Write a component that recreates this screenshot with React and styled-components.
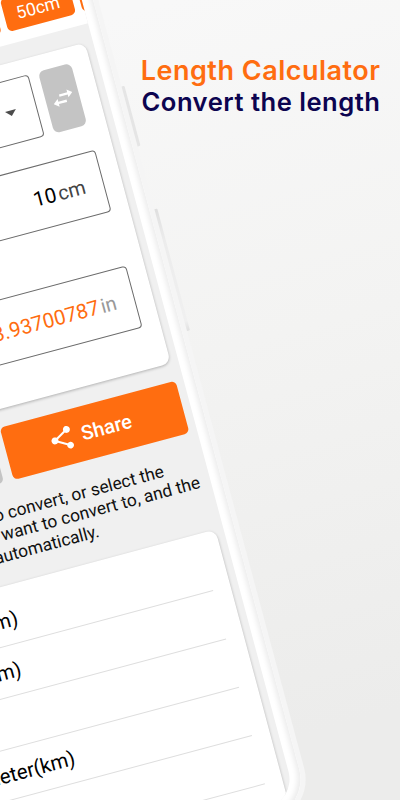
import React from "react";
import styled, { createGlobalStyle } from "styled-components";
import { MdShare, MdArrowDropDown } from "react-icons/md";

const GlobalStyle = createGlobalStyle`
  body {
    margin: 0;
    overflow: hidden;
    font-family: Roboto, "Liberation Sans", sans-serif;
  }

  * {
    box-sizing: border-box;
  }
`;

const Page = styled.main`
  display: grid;
  grid-template: 800px / 400px;
  width: 400px;
  height: 800px;
  overflow: hidden;
  background: linear-gradient(165deg, #f8f8f8 5%, #f3f3f2 45%, #ececeb 90%);
`;

const Headline = styled.header`
  grid-area: 1 / 1;
  justify-self: end;
  padding: 55px 20px 0 0;
  text-align: right;
  font-family: Inter, "Open Sans", sans-serif;
  font-weight: 600;
  line-height: 31px;
`;

const HeadlineText = styled.div`
  color: ${({ $color }) => $color};
  font-size: ${({ $size }) => $size}px;
  letter-spacing: ${({ $spacing }) => $spacing}px;
  margin-right: ${({ $spacing }) => -$spacing}px;
  white-space: nowrap;
`;

const Phone = styled.section`
  grid-area: 1 / 1;
  position: relative;
  width: 410px;
  height: 945px;
  margin: -80px 0 0 -315.5px;
  padding: 11px;
  border: 5px solid #f5f5f5;
  border-radius: 45px;
  background: #ffffff;
  box-shadow: inset -4px -2px 5px -1px #ededed;
  transform: rotate(-15deg);
  transform-origin: 315.5px 80px;
`;

const SideKey = styled.span`
  position: absolute;
  right: -8px;
  top: ${({ $top }) => $top}px;
  width: 3px;
  height: ${({ $height }) => $height}px;
  border-radius: 0 1px 1px 0;
  background: ${({ $background }) => $background};
`;

const Screen = styled.div`
  display: flex;
  flex-direction: column;
  height: 100%;
  overflow: hidden;
  border-radius: 29px;
  background: #f0f0f0;
`;

const ChipBar = styled.div`
  display: flex;
  flex: none;
  align-items: flex-end;
  justify-content: flex-end;
  gap: 7px;
  height: 109px;
  padding-bottom: 12px;
  background: #ffffff;
`;

const Chip = styled.button`
  flex: none;
  width: 70.5px;
  height: 34.5px;
  padding: 3px 0 0;
  border: none;
  border-radius: 5px;
  background: #ff6d10;
  color: #ffffff;
  font: 400 17.6px Roboto, sans-serif;

  &:last-child {
    margin-right: -68.5px;
  }
`;

const Card = styled.div`
  flex: none;
  margin: ${({ $top }) => $top}px 8px 0;
  padding: ${({ $padding }) => $padding};
  border-radius: 9px;
  background: #ffffff;
  box-shadow: 0 1px 3px rgba(0, 0, 0, 0.26);
`;

const SelectRow = styled.div`
  display: flex;
  gap: 10px;
  margin-bottom: 26px;
`;

const Field = styled.div`
  display: flex;
  flex: 1;
  align-items: center;
  justify-content: flex-end;
  height: 64px;
  margin-bottom: ${({ $bottom }) => $bottom || 0}px;
  padding: 2px ${({ $right }) => $right || 18}px 0 0;
  border: 1px solid #6b6b6b;
  border-radius: 4px;
  color: ${({ $color }) => $color || "#000000"};
  font-size: 20.6px;
`;

const Unit = styled.span`
  margin-left: 2px;
  color: ${({ $color }) => $color};
  font-size: 20px;
`;

const SwapButton = styled.button`
  display: flex;
  align-items: center;
  justify-content: center;
  width: 34px;
  height: 64px;
  margin-right: 1px;
  padding: 0;
  border: none;
  border-radius: 6px;
  background: #c4c4c4;
`;

const Actions = styled.div`
  display: flex;
  flex: none;
  gap: 10px;
  margin: 18px 8px 0;
`;

const ActionButton = styled.button`
  display: flex;
  flex: ${({ $wide }) => ($wide ? "none" : 1)};
  align-items: center;
  justify-content: center;
  gap: 6px;
  width: ${({ $wide }) => ($wide ? "182.5px" : "auto")};
  height: 54px;
  padding: 0 9px 0 0;
  border: none;
  border-radius: 5px;
  background: ${({ $wide }) => ($wide ? "#ff6d10" : "#c4c4c4")};
  color: #ffffff;
  font: 500 20px Roboto, sans-serif;
`;

const Help = styled.p`
  flex: none;
  margin: 20px 0 0;
  color: #111111;
  font-size: 17.4px;
  line-height: 20.8px;
  text-align: right;
`;

const HelpLine = styled.span`
  display: block;
  padding-right: ${({ $inset }) => $inset}px;
  white-space: nowrap;
`;

const UnitRow = styled.div`
  display: flex;
  align-items: center;
  justify-content: flex-end;
  height: 50px;
  padding-right: ${({ $inset }) => $inset}px;
  border-bottom: 1px solid #dedede;
  font-size: 20.4px;
`;

const units = [
  { name: "Meter(m)", inset: 196 },
  { name: "Micron(μm)", inset: 206 },
  { name: "Inch(in)", inset: 255 },
  { name: "Kilometer(km)", inset: 177 },
  { name: "Mile(mi)", inset: 265 },
  { name: "", inset: 0 }
];

const SwapIcon = () => (
  <svg width="21" height="16" viewBox="0 0 21 16" fill="#ffffff">
    <path d="M16 0.500l5 4-5 4V5.700H7.500V3.300H16z" />
    <path d="M5 7.500l-5 4 5 4V12.700h8.500v-2.400H5z" />
  </svg>
);

const App = () => (
  <>
    <GlobalStyle />
    <Page>
      <Phone>
        <SideKey $top={190} $height={62} $background="#e5e5e5" />
        <SideKey
          $top={317}
          $height={126}
          $background="linear-gradient(#dfdfdf, #ececec 25%, #f0f0f0 92%, #e0e0e0)"
        />
        <Screen>
          <ChipBar>
            <Chip>20cm</Chip>
            <Chip>50cm</Chip>
            <Chip>100cm</Chip>
          </ChipBar>
          <Card $top={17.5} $padding="16px 18px 42px">
            <SelectRow>
              <Field $right={12}>
                <MdArrowDropDown size={27} color="#4c4c4c" />
              </Field>
              <SwapButton>
                <SwapIcon />
              </SwapButton>
            </SelectRow>
            <Field $bottom={56}>
              10<Unit $color="#444444">cm</Unit>
            </Field>
            <Field $color="#ff6d10">
              3.93700787<Unit $color="#999999">in</Unit>
            </Field>
          </Card>
          <Actions>
            <ActionButton />
            <ActionButton $wide>
              <MdShare size={28} />
              Share
            </ActionButton>
          </Actions>
          <Help>
            <HelpLine $inset={43}>Enter value to convert, or select the</HelpLine>
            <HelpLine $inset={11}>unit you want to convert to, and the</HelpLine>
            <HelpLine $inset={121}>result is shown automatically.</HelpLine>
          </Help>
          <Card $top={18.5} $padding="9px 18px">
            {units.map(({ name, inset }, index) => (
              <UnitRow key={index} $inset={inset}>
                {name}
              </UnitRow>
            ))}
          </Card>
        </Screen>
      </Phone>
      <Headline>
        <HeadlineText $color="#ff6d10" $size={27} $spacing={0.5}>
          Length Calculator
        </HeadlineText>
        <HeadlineText $color="#0c0450" $size={25.6} $spacing={0.5}>
          Convert the length
        </HeadlineText>
      </Headline>
    </Page>
  </>
);

export default App;
